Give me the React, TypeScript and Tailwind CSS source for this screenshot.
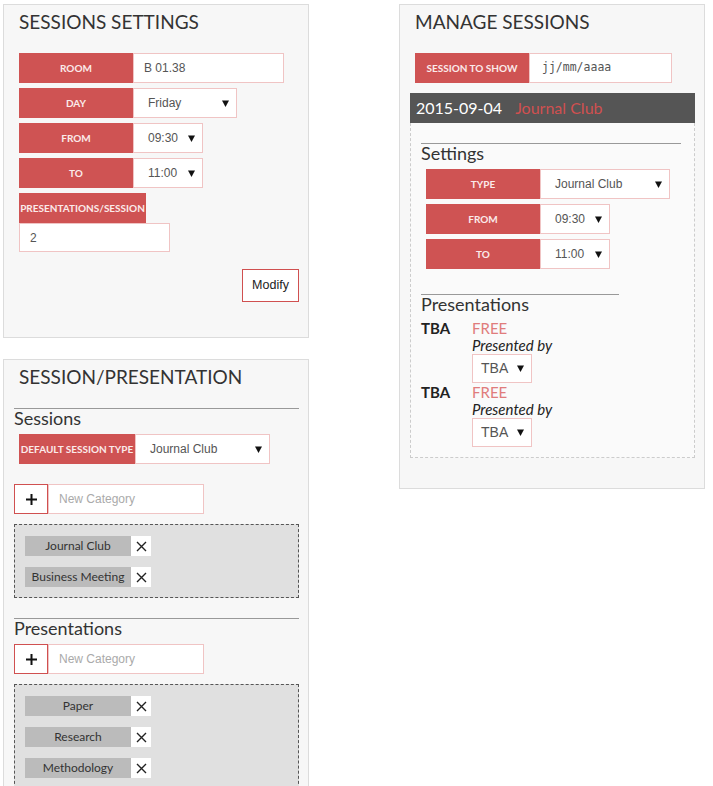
import React from 'react';

const lato = "font-['Lato',sans-serif]";
const arial = "font-['Liberation_Sans',Arial,sans-serif]";

function Arrow() {
  return (
    <svg width="7" height="7" viewBox="0 0 7 7" className="shrink-0">
      <polygon points="0,0.5 7,0.5 3.5,7" fill="#111" />
    </svg>
  );
}

function Cross() {
  return (
    <svg width="11" height="11" viewBox="0 0 11 11">
      <path d="M1 1 L10 10 M10 1 L1 10" stroke="#222" strokeWidth="1.4" />
    </svg>
  );
}

function Label({ text, width = 'w-[114px]' }: { text: string; width?: string }) {
  return (
    <div
      className={`${width} h-[30px] shrink-0 bg-[#cf5353] text-[#fbeaea] text-[10px] font-bold uppercase whitespace-nowrap flex items-center justify-center ${lato}`}
    >
      {text}
    </div>
  );
}

function Select({ value, width, pl = 'pl-[14px]' }: { value: string; width: string; pl?: string }) {
  return (
    <div
      className={`${width} h-[30px] bg-white border border-[#f0c4c4] ${pl} pr-[7px] flex items-center justify-between text-[12px] text-[#555] ${arial}`}
    >
      <span>{value}</span>
      <Arrow />
    </div>
  );
}

function Row({ label, children, labelWidth }: { label: string; children: React.ReactNode; labelWidth?: string }) {
  return (
    <div className="flex h-[30px]">
      <Label text={label} width={labelWidth} />
      {children}
    </div>
  );
}

function Tag({ name }: { name: string }) {
  return (
    <div className="flex h-[20px]">
      <div className={`w-[106px] h-[20px] bg-[#bbbbbb] text-[12px] text-[#333] flex items-center justify-center ${lato}`}>
        {name}
      </div>
      <div className="w-[20px] h-[20px] bg-white flex items-center justify-center">
        <Cross />
      </div>
    </div>
  );
}

function AddCategory() {
  return (
    <div className="flex h-[30px]">
      <button className="w-[34px] h-[30px] bg-white border border-[#d05050] flex items-center justify-center">
        <svg width="11" height="11" viewBox="0 0 11 11">
          <path d="M0 5.5 H11 M5.5 0 V11" stroke="#111" strokeWidth="2" />
        </svg>
      </button>
      <div className={`w-[156px] h-[30px] bg-white border border-[#f0c4c4] pl-[10px] flex items-center text-[12px] text-[#aaa] ${arial}`}>
        New Category
      </div>
    </div>
  );
}

function Presentation() {
  return (
    <div className={`flex ${lato}`}>
      <div className="w-[51px] text-[15px] leading-[18px] font-bold text-[#222]">TBA</div>
      <div className="flex flex-col">
        <div className="text-[15px] leading-[18px] text-[#e07c7c]">FREE</div>
        <div className="text-[15px] leading-[17px] italic text-[#222]">Presented by</div>
        <div
          className={`w-[60px] h-[29px] bg-white border border-[#f0c4c4] pl-[8px] pr-[7px] flex items-center justify-between text-[14px] text-[#555] ${arial}`}
        >
          <span>TBA</span>
          <Arrow />
        </div>
      </div>
    </div>
  );
}

export default function App() {
  return (
    <div className="min-h-[786px] bg-white flex items-start gap-[90px] pl-[3px] pt-[4px]">
      {/* left column */}
      <div className="flex flex-col gap-[21px]">
        <div className="w-[306px] h-[334px] border border-[#dcdcdc] bg-[#f7f7f7] pl-[10px] pr-[9px] pt-[5px]">
          <h2 className={`ml-[5px] text-[19px] leading-[24px] text-[#333] ${lato}`}>SESSIONS SETTINGS</h2>
          <div className="ml-[5px] mt-[19px] flex flex-col gap-[5px]">
            <Row label="Room">
              <div className={`w-[151px] h-[30px] bg-white border border-[#f0c4c4] pl-[10px] flex items-center text-[12px] text-[#555] ${arial}`}>
                B 01.38
              </div>
            </Row>
            <Row label="Day">
              <Select value="Friday" width="w-[104px]" />
            </Row>
            <Row label="From">
              <Select value="09:30" width="w-[70px]" />
            </Row>
            <Row label="To">
              <Select value="11:00" width="w-[70px]" />
            </Row>
            <div className="flex flex-col">
              <Label text="Presentations/Session" width="w-[127px]" />
              <div className={`w-[151px] h-[29px] bg-white border border-[#f0c4c4] pl-[10px] flex items-center text-[12px] text-[#555] ${arial}`}>
                2
              </div>
            </div>
          </div>
          <div className="flex justify-end mt-[17px]">
            <button className={`w-[57px] h-[33px] bg-white border border-[#d05050] text-[12.5px] text-[#222] ${arial}`}>
              Modify
            </button>
          </div>
        </div>

        <div className="w-[306px] h-[440px] border border-[#dcdcdc] bg-[#f7f7f7] pl-[10px] pr-[9px] pt-[5px]">
          <h2 className={`ml-[5px] text-[19px] leading-[24px] text-[#333] ${lato}`}>SESSION/PRESENTATION</h2>
          <div className="mt-[19px] border-t border-[#999]" />
          <h3 className={`text-[18px] leading-[18px] text-[#333] ${lato}`}>Sessions</h3>
          <div className="ml-[5px] mt-[7px]">
            <Row label="Default session type" labelWidth="w-[116px]">
              <Select value="Journal Club" width="w-[135px]" />
            </Row>
          </div>
          <div className="mt-[20px]">
            <AddCategory />
          </div>
          <div className="mt-[10px] border border-dashed border-[#555] bg-[#e0e0e0] pt-[11px] pb-[10px] pl-[10px] flex flex-col gap-[11px]">
            <Tag name="Journal Club" />
            <Tag name="Business Meeting" />
          </div>
          <div className="mt-[20px] border-t border-[#999]" />
          <h3 className={`text-[18px] leading-[18px] text-[#333] ${lato}`}>Presentations</h3>
          <div className="mt-[7px]">
            <AddCategory />
          </div>
          <div className="mt-[10px] border border-dashed border-[#555] bg-[#e0e0e0] pt-[11px] pb-[10px] pl-[10px] flex flex-col gap-[11px]">
            <Tag name="Paper" />
            <Tag name="Research" />
            <Tag name="Methodology" />
          </div>
        </div>
      </div>

      {/* right column */}
      <div className="w-[306px] h-[485px] border border-[#dcdcdc] bg-[#f7f7f7] pl-[10px] pr-[9px] pt-[5px]">
        <h2 className={`ml-[5px] text-[19px] leading-[24px] text-[#333] ${lato}`}>MANAGE SESSIONS</h2>
        <div className="ml-[5px] mt-[19px]">
          <Row label="Session to show">
            <div className="w-[143px] h-[30px] bg-white border border-[#f0c4c4] pl-[12px] flex items-center text-[11.5px] text-[#555] font-['DejaVu_Sans_Mono',monospace]">
              jj/mm/aaaa
            </div>
          </Row>
        </div>
        <div className={`mt-[10px] h-[30px] bg-[#555] pl-[6px] flex items-center gap-[13px] text-[16px] ${lato}`}>
          <span className="text-white">2015-09-04</span>
          <span className="text-[#d05050]">Journal Club</span>
        </div>
        <div className="border border-t-0 border-dashed border-[#ccc] bg-[#fafafa] pt-[20px] pl-[10px] pr-[13px] pb-[10px]">
          <div className="border-t border-[#999]" />
          <h3 className={`text-[18px] leading-[18px] text-[#333] ${lato}`}>Settings</h3>
          <div className="ml-[5px] mt-[7px] flex flex-col gap-[5px]">
            <Row label="Type">
              <Select value="Journal Club" width="w-[130px]" />
            </Row>
            <Row label="From">
              <Select value="09:30" width="w-[70px]" />
            </Row>
            <Row label="To">
              <Select value="11:00" width="w-[70px]" />
            </Row>
          </div>
          <div className="mt-[25px] w-[198px] border-t border-[#999]" />
          <h3 className={`text-[18px] leading-[18px] text-[#333] ${lato}`}>Presentations</h3>
          <div className="mt-[6px] flex flex-col">
            <Presentation />
            <Presentation />
          </div>
        </div>
      </div>
    </div>
  );
}
